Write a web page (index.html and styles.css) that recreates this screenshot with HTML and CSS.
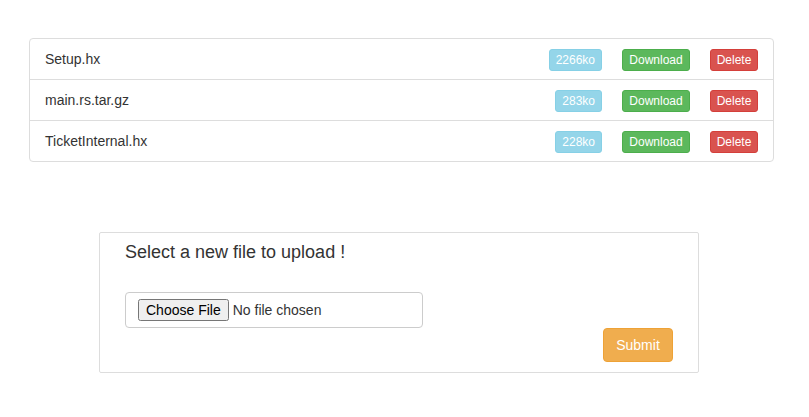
FILE: index.html
```html
<!DOCTYPE html>
<html>
<head>
<meta charset="utf-8">
<link rel="stylesheet" href="styles.css">
</head>
<body>
<div class="page">
  <ul class="list-group">
    <li class="list-item">
      <span class="name">Setup.hx</span>
      <span class="actions">
        <button class="btn btn-xs btn-size" disabled>2266ko</button>
        <button class="btn btn-xs btn-success">Download</button>
        <button class="btn btn-xs btn-danger">Delete</button>
      </span>
    </li>
    <li class="list-item">
      <span class="name">main.rs.tar.gz</span>
      <span class="actions">
        <button class="btn btn-xs btn-size" disabled>283ko</button>
        <button class="btn btn-xs btn-success">Download</button>
        <button class="btn btn-xs btn-danger">Delete</button>
      </span>
    </li>
    <li class="list-item">
      <span class="name">TicketInternal.hx</span>
      <span class="actions">
        <button class="btn btn-xs btn-size" disabled>228ko</button>
        <button class="btn btn-xs btn-success">Download</button>
        <button class="btn btn-xs btn-danger">Delete</button>
      </span>
    </li>
  </ul>

  <form class="upload-panel">
    <h4 class="upload-title">Select a new file to upload !</h4>
    <div class="file-control"><input type="file" class="file-input"></div>
    <div class="submit-row"><button type="button" class="btn btn-warning btn-submit">Submit</button></div>
  </form>
</div>
</body>
</html>
```

FILE: styles.css
```css
* { box-sizing: border-box; }
html, body { margin: 0; padding: 0; background: #fff; }
body {
  font-family: "Liberation Sans", Arial, sans-serif;
  font-size: 14px;
  line-height: 20px;
  color: #333;
}
.page {
  padding: 38px 35px 0 29px;
}
.list-group {
  list-style: none;
  margin: 0;
  padding: 0;
  border: 1px solid #ddd;
  border-radius: 4px;
}
.list-item {
  display: flex;
  align-items: center;
  justify-content: space-between;
  height: 41px;
  padding: 0 15px;
  border-top: 1px solid #ddd;
}
.list-item:first-child { border-top: none; height: 40px; }
.actions {
  display: flex;
  gap: 20px;
  padding-top: 1px;
}
.btn {
  font-family: "Liberation Sans", Arial, sans-serif;
  border: 1px solid transparent;
  color: #fff;
  cursor: pointer;
  text-align: center;
}
.btn-xs {
  font-size: 12px;
  line-height: 18px;
  height: 22px;
  padding: 1px 6px;
  border-radius: 3px;
}
.btn-success.btn-xs { width: 68px; padding: 1px 0; }
.btn-danger.btn-xs { width: 48px; padding: 1px 0; }
.btn-size {
  background: #5bc0de;
  border-color: #46b8da;
  opacity: .65;
  color: #fff;
}
.btn-success { background: #5cb85c; border-color: #4cae4c; }
.btn-danger { background: #d9534f; border-color: #d43f3a; }

.upload-panel {
  margin: 70px 0 0 70px;
  width: 600px;
  height: 141px;
  border: 1px solid #ddd;
  border-radius: 2px;
  padding: 8px 25px 0 25px;
}
.upload-title {
  margin: 0;
  font-size: 18px;
  font-weight: 500;
  line-height: 22px;
}
.file-control {
  margin-top: 29px;
  width: 298px;
  height: 36px;
  border: 1px solid #ccc;
  border-radius: 4px;
  padding: 6px 12px;
  display: flex;
  align-items: center;
}
.file-input {
  font-family: "Liberation Sans", Arial, sans-serif;
  font-size: 14px;
  color: #333;
}
.submit-row {
  display: flex;
  justify-content: flex-end;
  margin-top: 0;
}
.btn-warning {
  background: #f0ad4e;
  border-color: #eea236;
}
.btn-submit {
  font-size: 14px;
  height: 34px;
  width: 70px;
  padding: 6px 12px;
  line-height: 20px;
  border-radius: 4px;
}
```
